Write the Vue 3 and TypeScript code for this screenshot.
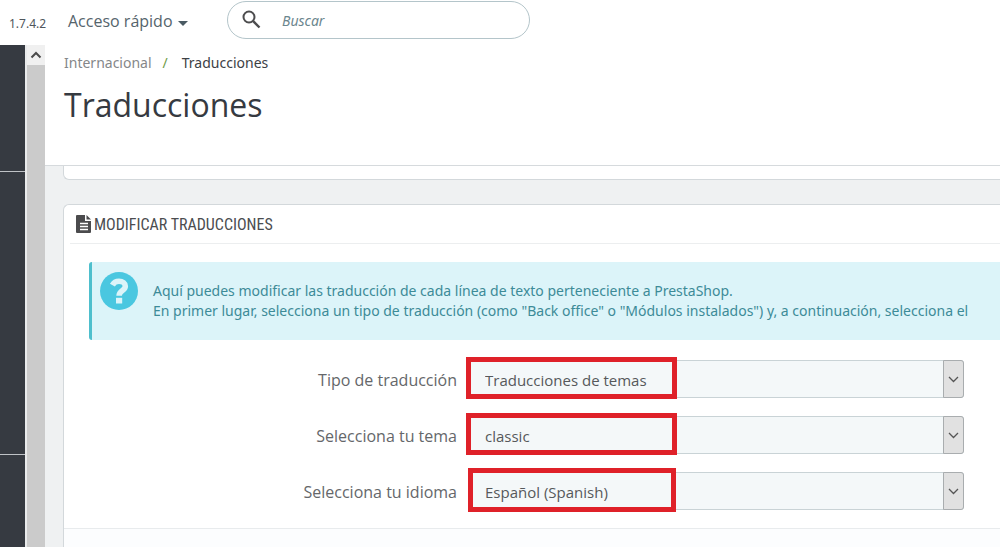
<script setup lang="ts">
import { ref } from 'vue'

interface Field {
  id: string
  label: string
  options: string[]
}

const fields: Field[] = [
  { id: 'type', label: 'Tipo de traducción', options: ['Traducciones de temas'] },
  { id: 'theme', label: 'Selecciona tu tema', options: ['classic'] },
  { id: 'lang', label: 'Selecciona tu idioma', options: ['Español (Spanish)'] },
]
const selected = ref<Record<string, string>>({
  type: 'Traducciones de temas',
  theme: 'classic',
  lang: 'Español (Spanish)',
})
const query = ref('')
</script>

<template>
  <div class="page">
    <header class="topbar">
      <span class="version">1.7.4.2</span>
      <button class="quick" type="button">
        Acceso rápido
        <svg width="10" height="5" viewBox="0 0 10 5"><path d="M0 0h10L5 5z" fill="#4a5a63" /></svg>
      </button>
      <label class="search">
        <svg width="20" height="20" viewBox="0 0 20 20" fill="none" stroke="#4c4c4e">
          <circle cx="7" cy="7" r="5.500" stroke-width="2" />
          <path d="M11.200 11.200 17.500 17.500" stroke-width="2.400" />
        </svg>
        <input v-model="query" type="text" placeholder="Buscar" aria-label="Buscar" />
      </label>
    </header>

    <div class="body">
      <nav class="sidebar" aria-label="Menú">
        <div class="side-group first"></div>
        <div class="side-group second"></div>
      </nav>
      <div class="scrollbar">
        <button class="scroll-up" type="button" aria-label="Subir">
          <svg width="12" height="8" viewBox="0 0 12 8"><path d="M1.500 6.500 6 2l4.500 4.500" fill="none" stroke="#4b4b4b" stroke-width="2" /></svg>
        </button>
      </div>

      <main class="main">
        <div class="page-head">
          <nav class="crumbs">
            <a href="#">Internacional</a>
            <span class="slash">/</span>
            <span class="current">Traducciones</span>
          </nav>
          <h1>Traducciones</h1>
        </div>

        <div class="previous-panel"></div>

        <section class="panel">
          <h2>
            <svg width="16" height="18" viewBox="0 0 16 18">
              <path d="M1 0h8v6h6v11a1 1 0 0 1-1 1H1a1 1 0 0 1-1-1V1a1 1 0 0 1 1-1z" fill="#4b4b4d" />
              <path d="M10.500 0 15 4.500h-4.500z" fill="#4b4b4d" />
              <path d="M4 8.500h8M4 11.500h8M4 14.500h8" stroke="#fff" stroke-width="1.300" />
            </svg>
            <span>MODIFICAR TRADUCCIONES</span>
          </h2>

          <div class="alert">
            <svg class="help" width="38" height="38" viewBox="0 0 38 38">
              <circle cx="19" cy="19" r="19" fill="#4ac7e0" />
              <path d="M12.400 13.200C13.800 10.600 16 9.300 19 9.300c3.800 0 6.300 1.900 6.300 4.900 0 4.600-6.200 4-6.200 9.600" fill="none" stroke="#dcf4f9" stroke-width="5.600" />
              <path d="M16 25.800h6.200v5.700H16z" fill="#dcf4f9" />
            </svg>
            <p>
              Aquí puedes modificar las traducción de cada línea de texto perteneciente a PrestaShop.<br />
              En primer lugar, selecciona un tipo de traducción (como "Back office" o "Módulos instalados") y, a continuación, selecciona el
            </p>
          </div>

          <form class="form" @submit.prevent>
            <div v-for="f in fields" :key="f.id" class="row">
              <label :for="f.id">{{ f.label }}</label>
              <div class="field">
                <select :id="f.id" v-model="selected[f.id]">
                  <option v-for="o in f.options" :key="o">{{ o }}</option>
                </select>
                <span class="arrow">
                  <svg width="11" height="7" viewBox="0 0 11 7"><path d="M1 1l4.500 4.500L10 1" fill="none" stroke="#555" stroke-width="1.300" /></svg>
                </span>
                <span class="mark" :class="f.id"></span>
              </div>
            </div>
          </form>
          <footer class="panel-footer"></footer>
        </section>
      </main>
    </div>
  </div>
</template>

<style>
body {
  background: #fff;
  overflow: hidden;
}
</style>

<style scoped>
* {
  box-sizing: border-box;
}
.page {
  display: flex;
  flex-direction: column;
  height: 100vh;
  overflow: hidden;
  font-family: "Open Sans", "Noto Sans", sans-serif;
  font-size: 16px;
  color: #5a5c5e;
}
button {
  border: 0;
  padding: 0;
  background: none;
  font: inherit;
  color: inherit;
}
.topbar {
  display: flex;
  align-items: center;
  flex: none;
  height: 45px;
  padding: 0 0 5px 9px;
}
.version {
  width: 59px;
  padding-top: 7px;
  font-family: "Noto Sans", sans-serif;
  font-size: 12px;
  color: #4f565c;
}
.quick {
  display: flex;
  align-items: center;
  gap: 5px;
  width: 159px;
  padding-top: 2px;
  font-size: 16px;
  color: #55646c;
}
.quick svg {
  margin-top: 4px;
}
.search {
  display: flex;
  align-items: center;
  gap: 20px;
  width: 303px;
  height: 38px;
  padding: 0 14px;
  border: 1px solid #b4c5ca;
  border-radius: 19px;
}
.search svg {
  flex: none;
}
.search input {
  flex: 1;
  min-width: 0;
  padding: 0;
  border: 0;
  outline: 0;
  background: none;
  font: italic 14px "Noto Sans", "Open Sans", sans-serif;
}
.search input::placeholder {
  color: #6c868e;
  opacity: 1;
}
.body {
  display: flex;
  flex: 1;
  min-height: 0;
}
.sidebar {
  flex: none;
  width: 25px;
  background: #363a41;
}
.side-group {
  border-bottom: 1px solid #bfc2c6;
}
.first {
  height: 127px;
}
.second {
  height: 283px;
}
.scrollbar {
  flex: none;
  width: 20px;
  border-left: 2px solid #e9eaeb;
  background: #cbcbcb;
}
.scroll-up {
  display: flex;
  align-items: center;
  justify-content: center;
  width: 100%;
  height: 20px;
  background: #f0f0f0;
}
.main {
  display: flex;
  flex-direction: column;
  flex: 1;
  min-width: 0;
  background: #eff1f2;
}
.page-head {
  height: 121px;
  padding: 7px 19px 0;
  border-bottom: 1px solid #d6dadd;
  background: #fff;
}
.crumbs {
  display: flex;
  gap: 11px;
  font-family: "Noto Sans", "Open Sans", sans-serif;
  font-size: 14px;
  line-height: 21px;
}
.crumbs a {
  color: #858789;
  text-decoration: none;
}
.slash {
  color: #6f9c48;
}
.current {
  margin-left: 3px;
  color: #3d4145;
}
h1 {
  margin: 10px 0 0;
  font-size: 32px;
  line-height: 44px;
  font-weight: 400;
  color: #363a41;
}
.previous-panel {
  height: 14px;
  margin-left: 18px;
  border: 1px solid #d3d8db;
  border-width: 0 0 1px 1px;
  border-radius: 0 0 0 6px;
  background: #fff;
}
.panel {
  display: flex;
  flex-direction: column;
  flex: 1;
  margin: 24px 0 0 18px;
  border: 1px solid #d3d8db;
  border-width: 1px 0 0 1px;
  border-radius: 6px 0 0 0;
  background: #fff;
}
h2 {
  display: flex;
  align-items: center;
  gap: 2px;
  height: 39px;
  margin: 0 0 0 6px;
  padding-left: 6px;
  border-bottom: 1px solid #eceeef;
  font-family: "Roboto Condensed", "Open Sans Condensed", sans-serif;
  font-size: 16px;
  font-weight: 400;
  color: #4b4d50;
  white-space: nowrap;
}
.alert {
  display: flex;
  gap: 15px;
  height: 78px;
  margin: 18px 0 0 25px;
  padding: 10px 0 0 8px;
  border-left: 3px solid #4ebfcd;
  border-radius: 3px 0 0 3px;
  background: #dcf4f9;
  color: #3d8b98;
  overflow: hidden;
}
.help {
  flex: none;
}
.alert p {
  margin: 9px 0 0;
  font-family: "Noto Sans", "Open Sans", sans-serif;
  font-size: 14px;
  line-height: 20px;
  white-space: nowrap;
}
.form {
  display: flex;
  flex-direction: column;
  gap: 18px;
  padding: 20px 36px 18px 0;
}
.row {
  display: grid;
  grid-template-columns: 393fr 496fr;
  gap: 11px;
  align-items: center;
}
.row label {
  padding-top: 2px;
  text-align: right;
  font-size: 16px;
  color: #65676a;
}
.field {
  position: relative;
  height: 38px;
}
select {
  width: 100%;
  height: 38px;
  padding: 2px 30px 0 16px;
  border: 1px solid #c9d3d6;
  border-radius: 3px;
  appearance: none;
  background: #f4f8f9;
  font: 15px "Open Sans", "Noto Sans", sans-serif;
  color: #56595b;
}
.arrow {
  position: absolute;
  top: 0;
  right: 0;
  display: flex;
  align-items: center;
  justify-content: center;
  width: 21px;
  height: 38px;
  border: 1px solid #a9adaf;
  border-radius: 0 3px 3px 0;
  background: #e1e1e1;
  pointer-events: none;
}
.mark {
  position: absolute;
  top: -3px;
  left: -2px;
  width: 211px;
  height: 42px;
  border: 5px solid #df2129;
  pointer-events: none;
}
.mark.lang {
  top: -4px;
  left: 0;
  width: 208px;
  height: 44px;
}
.panel-footer {
  flex: 1;
  border-top: 1px solid #e8ebed;
  background: #fcfdfe;
}
</style>
